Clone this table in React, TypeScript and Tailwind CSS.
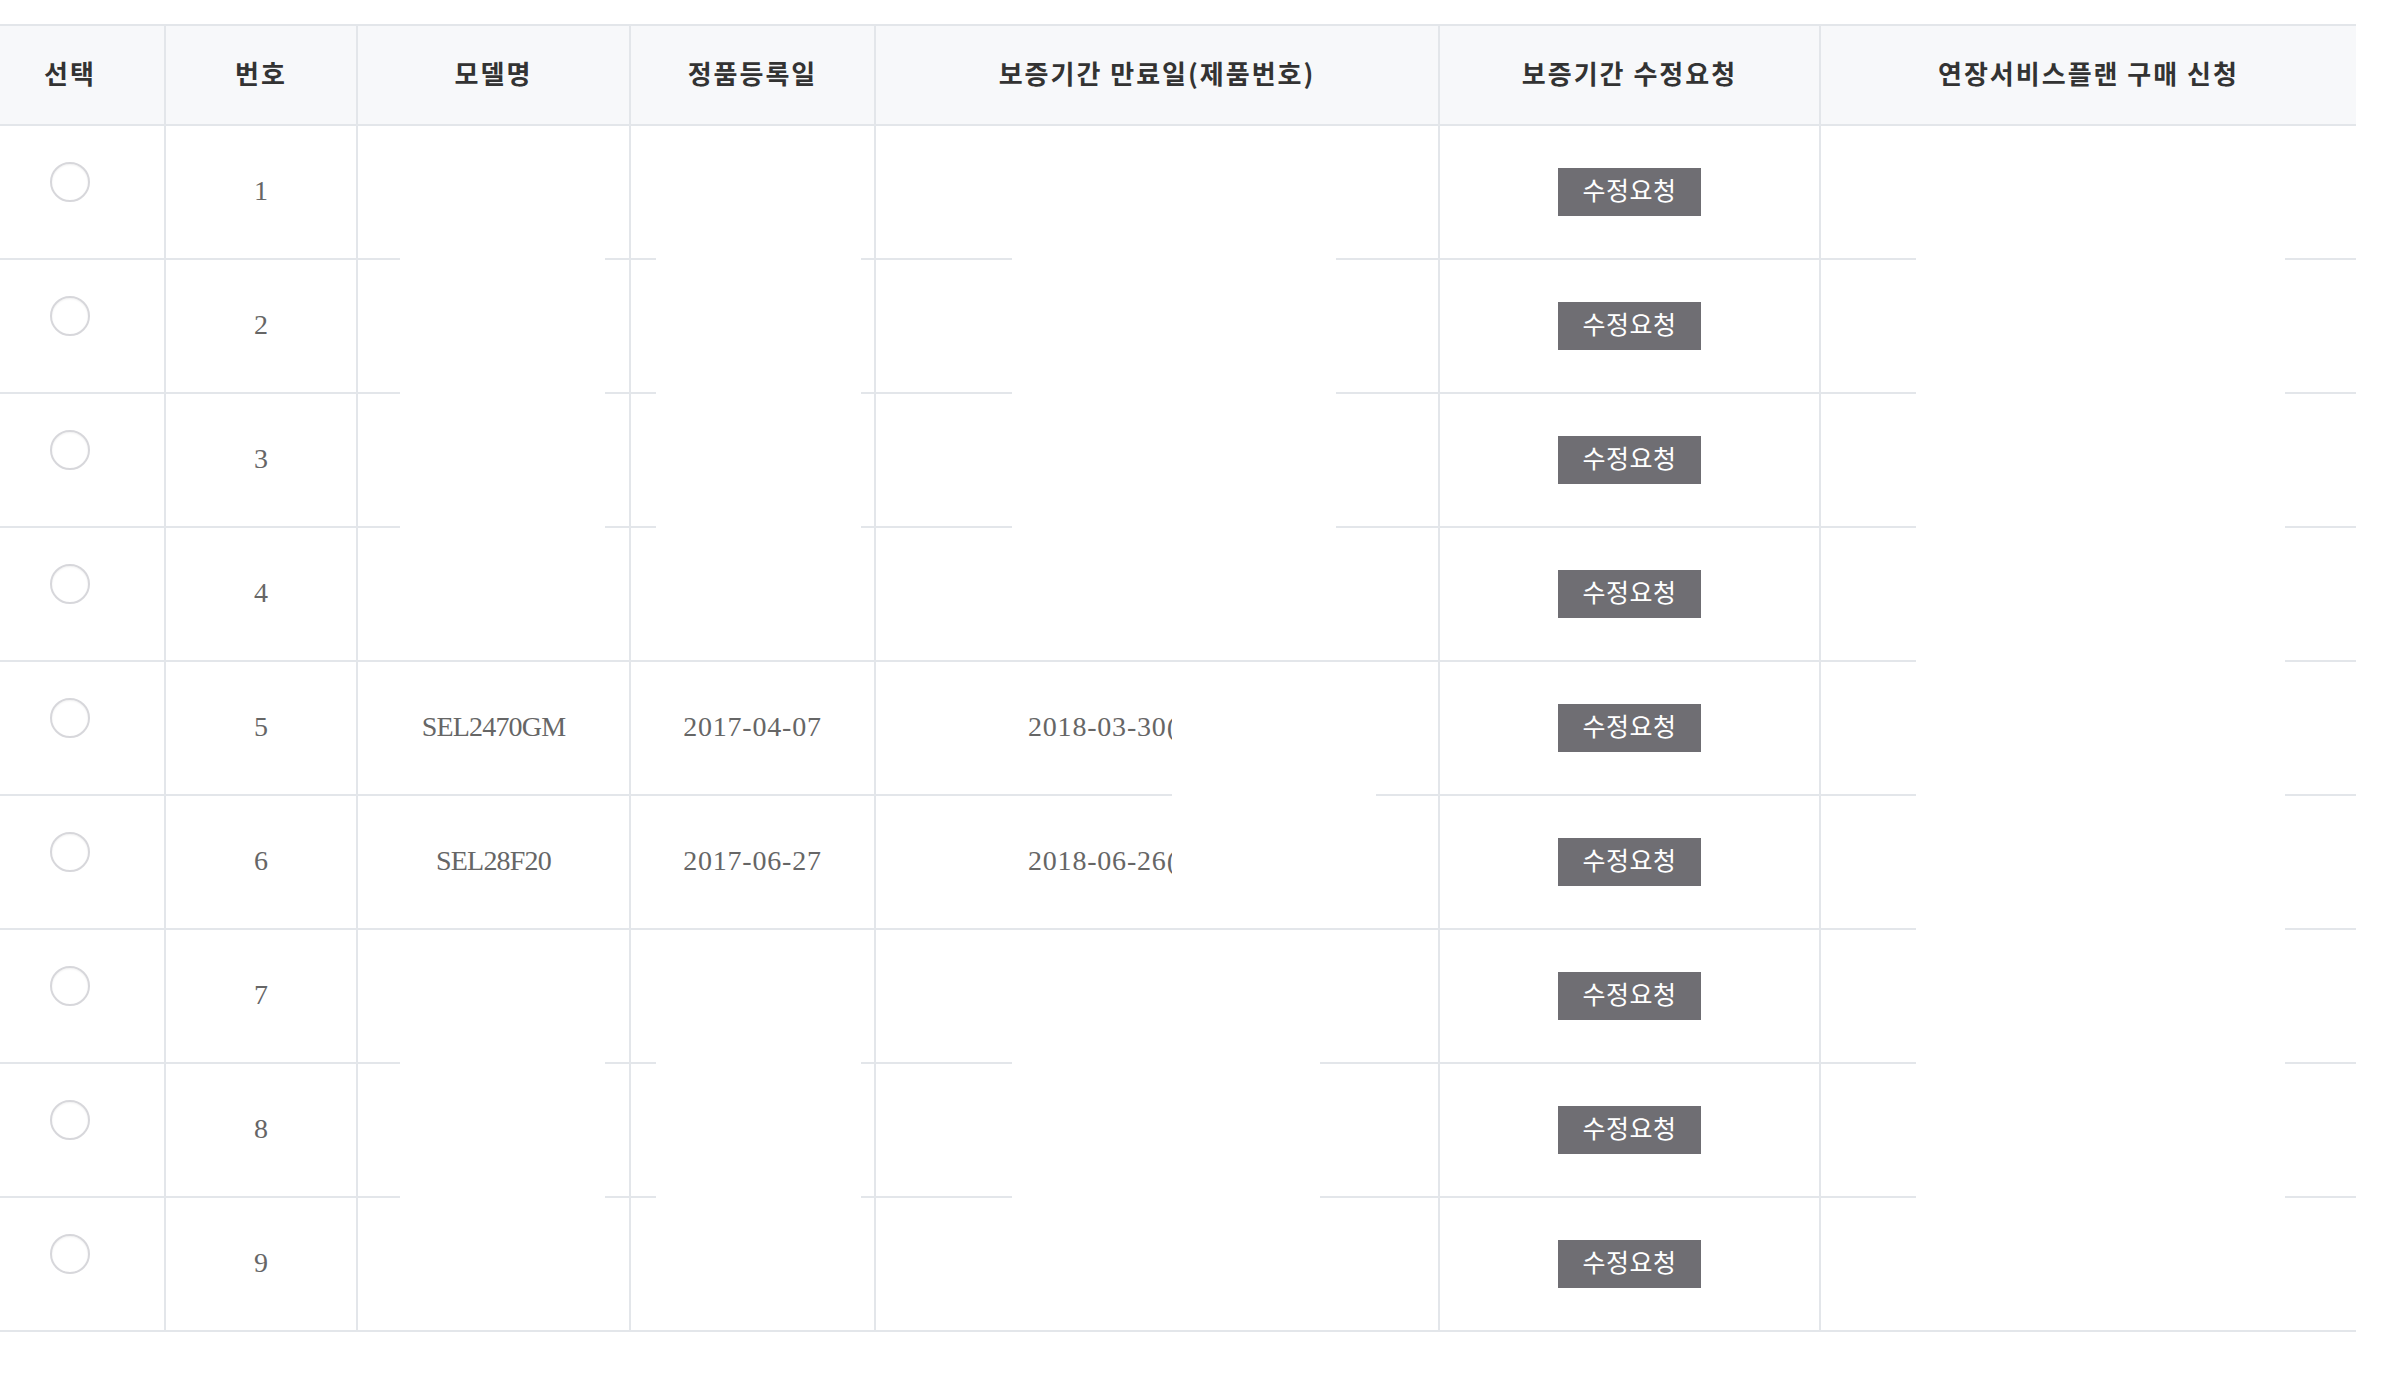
import React from "react";

interface Row {
  no: number;
  model?: string;
  registered?: string;
  expiry?: string;
}

const rows: Row[] = [
  { no: 1 },
  { no: 2 },
  { no: 3 },
  { no: 4 },
  { no: 5, model: "SEL2470GM", registered: "2017-04-07", expiry: "2018-03-30(4920315)" },
  { no: 6, model: "SEL28F20", registered: "2017-06-27", expiry: "2018-06-26(1835207)" },
  { no: 7 },
  { no: 8 },
  { no: 9 },
];

const headers = [
  "선택",
  "번호",
  "모델명",
  "정품등록일",
  "보증기간 만료일(제품번호)",
  "보증기간 수정요청",
  "연장서비스플랜 구매 신청",
];

const grid = "grid grid-cols-[190px_192px_273px_245px_564px_381px_535px]";
const kr = { fontFamily: '"Noto Sans CJK KR", "Noto Sans", sans-serif' };
const serif = { fontFamily: '"Liberation Serif", serif' };

// white blocks that sit over the row lines, as in the captured page
const masks = [
  "left-[400px] top-[140px] w-[205px] h-[500px]",
  "left-[656px] top-[140px] w-[205px] h-[500px]",
  "left-[1012px] top-[140px] w-[324px] h-[500px]",
  "left-[1172px] top-[680px] w-[204px] h-[230px]",
  "left-[1916px] top-[140px] w-[369px] h-[1180px]",
  "left-[400px] top-[945px] w-[205px] h-[370px]",
  "left-[656px] top-[945px] w-[205px] h-[370px]",
  "left-[1012px] top-[945px] w-[308px] h-[370px]",
];

const Cell: React.FC<{ last?: boolean; className?: string; children?: React.ReactNode }> = ({
  last,
  className,
  children,
}) => (
  <div
    className={`h-[134px] border-b-2 border-[#e3e6ea] flex items-center ${
      last ? "" : "border-r-2"
    } ${className ?? ""}`}
  >
    {children}
  </div>
);

const App: React.FC = () => {
  return (
    <div className="relative min-h-screen w-full overflow-hidden bg-white">
      <div className="mt-[24px] -ml-[24px] w-[2380px] border-t-2 border-[#e3e6ea]">
        <div className={grid}>
          {headers.map((h, i) => (
            <div
              key={h}
              style={kr}
              className={`h-[100px] pb-[5px] bg-[#f7f8fa] border-b-2 border-[#e3e6ea] flex items-center justify-center text-[26px] tracking-[2px] font-bold text-[#333] ${
                i < headers.length - 1 ? "border-r-2" : ""
              }`}
            >
              {h}
            </div>
          ))}
        </div>

        {rows.map((r) => (
          <div key={r.no} className={grid}>
            <Cell className="justify-center">
              <span className="mb-[20px] block w-[40px] h-[40px] rounded-full border-2 border-[#d7d7db] bg-white shadow-[inset_0_1px_2px_rgba(0,0,0,0.06)]" />
            </Cell>
            <Cell className="justify-center pb-[3px]">
              <span style={serif} className="text-[28px] text-[#666]">
                {r.no}
              </span>
            </Cell>
            <Cell className="justify-center pb-[3px]">
              <span style={serif} className="text-[28px] tracking-[-0.8px] text-[#666]">
                {r.model}
              </span>
            </Cell>
            <Cell className="justify-center pb-[3px]">
              <span style={serif} className="text-[28px] tracking-[0.8px] text-[#666]">
                {r.registered}
              </span>
            </Cell>
            <Cell className="pl-[152px] pb-[3px]">
              <span style={serif} className="text-[28px] tracking-[0.8px] text-[#666] whitespace-nowrap">
                {r.expiry}
              </span>
            </Cell>
            <Cell className="justify-center">
              <button
                style={kr}
                className="w-[143px] h-[48px] pb-[5px] bg-[#6f6e73] text-white text-[25px] tracking-[0.5px] leading-none"
              >
                수정요청
              </button>
            </Cell>
            <Cell last />
          </div>
        ))}
      </div>

      {masks.map((m) => (
        <div key={m} className={`absolute bg-white ${m}`} />
      ))}
    </div>
  );
};

export default App;
